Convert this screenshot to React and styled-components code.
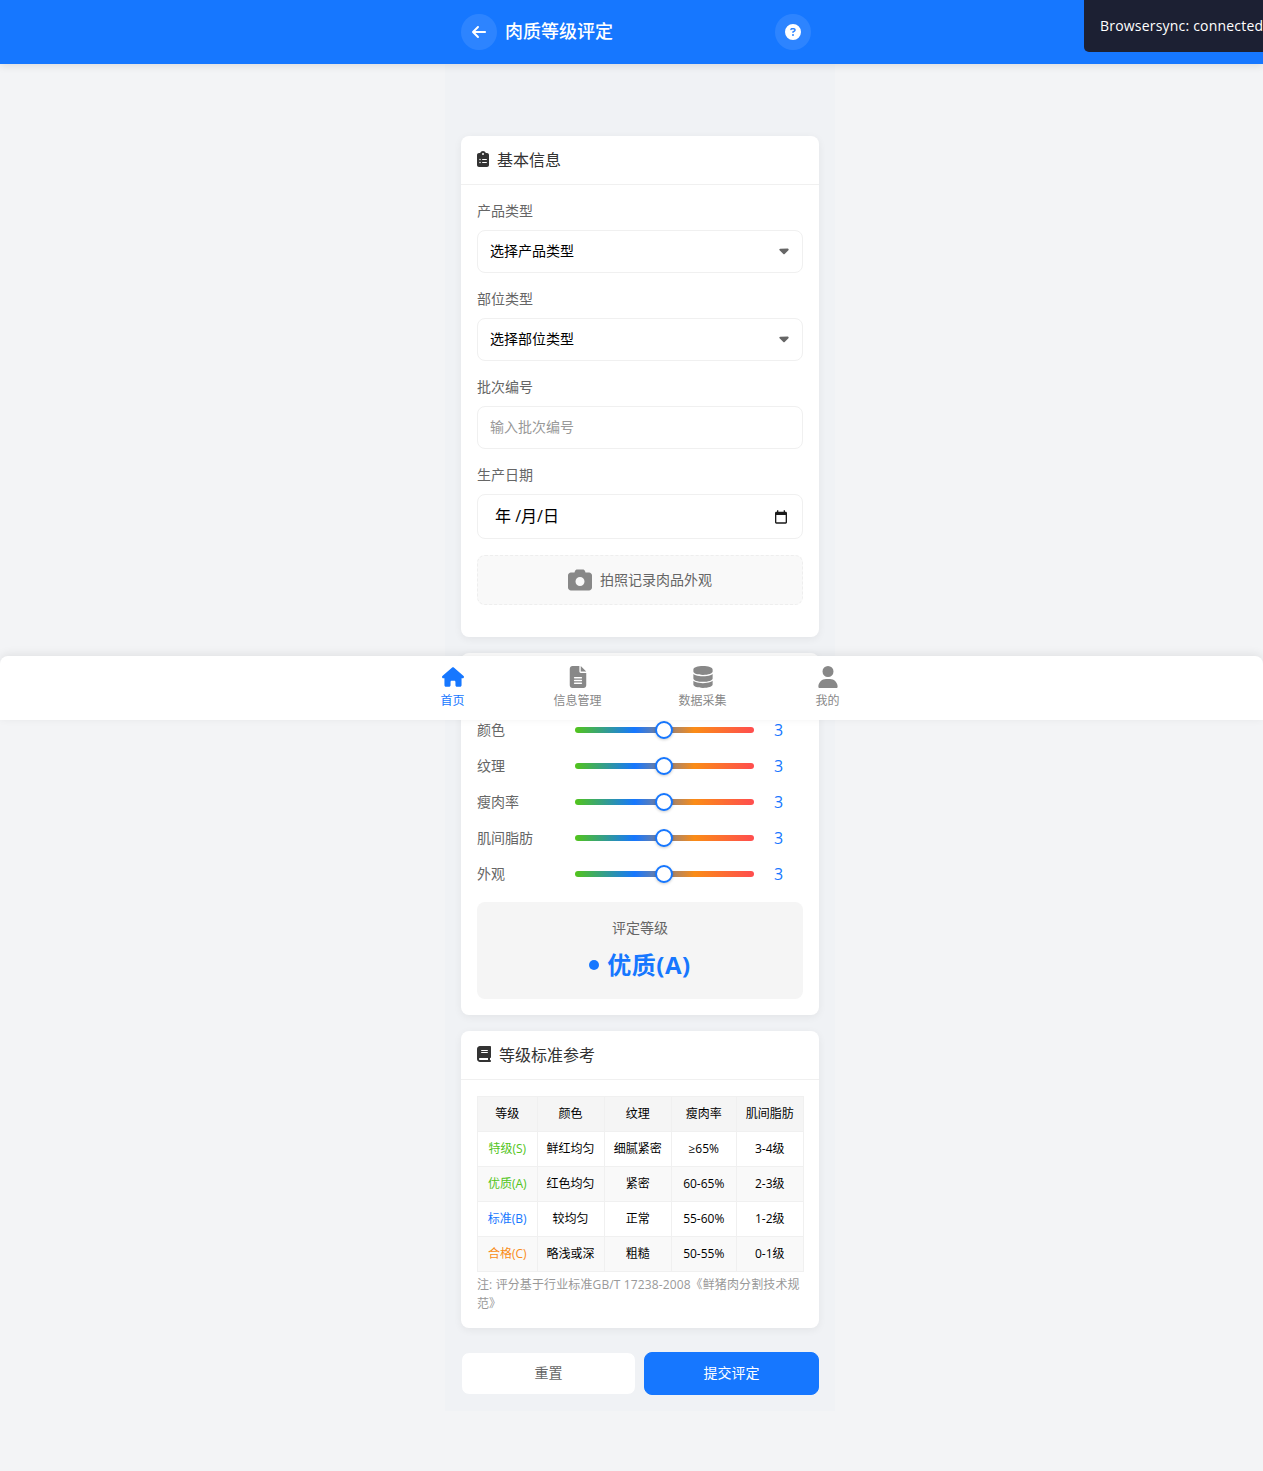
import React from "react";
import styled, { createGlobalStyle } from "styled-components";
import {
  FaArrowLeft,
  FaCircleQuestion,
  FaClipboardList,
  FaBook,
  FaCamera,
  FaHouse,
  FaFileLines,
  FaDatabase,
  FaUser,
  FaCaretDown,
} from "react-icons/fa6";

const GlobalStyle = createGlobalStyle`
  html, body {
    margin: 0;
    padding: 0;
    background: #f3f4f6;
  }
  * {
    box-sizing: border-box;
  }
  body {
    font-family: "Open Sans", "Noto Sans CJK SC", sans-serif;
    color: #333;
  }
`;

const Page = styled.div`
  position: relative;
  width: 100%;
  height: 1471px;
  overflow: hidden;
`;

const Header = styled.header`
  position: relative;
  height: 64px;
  background: #1677ff;
  box-shadow: 0 2px 8px rgba(0, 0, 0, 0.1);
  display: flex;
  justify-content: center;
  padding-left: 17px;
`;

const HeaderInner = styled.div`
  width: 358px;
  display: flex;
  align-items: center;
  padding-right: 8px;
`;

const RoundButton = styled.div`
  width: 36px;
  height: 36px;
  border-radius: 50%;
  background: rgba(255, 255, 255, 0.1);
  color: #fff;
  font-size: 16px;
  display: flex;
  align-items: center;
  justify-content: center;
`;

const Title = styled.h1`
  flex: 1;
  margin: 0 0 4px 8px;
  font-size: 18px;
  font-weight: 500;
  color: #fff;
`;

const Toast = styled.div`
  position: absolute;
  top: 0;
  right: 0;
  width: 179px;
  height: 52px;
  padding: 16px 0 0 16px;
  background: #1c2033;
  color: #fff;
  font-size: 14px;
  line-height: 20px;
  letter-spacing: 0.2px;
  white-space: nowrap;
  overflow: hidden;
  border-bottom-left-radius: 5px;
`;

const Content = styled.div`
  display: flex;
  justify-content: center;
  padding-left: 17px;
`;

const Main = styled.main`
  display: flex;
  flex-direction: column;
  gap: 16px;
  width: 390px;
  padding: 72px 16px 16px;
  background: #f0f2f5;
`;

const Card = styled.section`
  background: #fff;
  border-radius: 8px;
  box-shadow: 0 2px 8px rgba(0, 0, 0, 0.06);
`;

const CardHeader = styled.div`
  height: 49px;
  padding: 0 16px 3px;
  border-bottom: 1px solid #f0f0f0;
  display: flex;
  align-items: center;
  gap: 8px;
  font-size: 16px;
  font-weight: 400;
  color: #333;

  svg {
    height: 16px;
    width: ${({ $iconWidth }) => $iconWidth}px;
  }
`;

const CardBody = styled.div`
  padding: ${({ $bottom }) => `16px 16px ${$bottom}px`};
`;

const Field = styled.div`
  margin-bottom: 16px;
`;

const Label = styled.label`
  display: block;
  font-size: 14px;
  line-height: 19px;
  margin-bottom: 10px;
  color: #666;
`;

const SelectBox = styled.div`
  height: 43px;
  padding: 0 13px 4px 12px;
  border: 1px solid #f0f0f0;
  border-radius: 8px;
  display: flex;
  align-items: center;
  justify-content: space-between;
  font-size: 14px;
  color: #000;

  svg {
    height: 15px;
    width: 10px;
    color: #666;
    position: relative;
    top: 1px;
  }
`;

const TextInput = styled.input`
  display: block;
  width: 100%;
  height: 43px;
  padding: 0 12px 2px;
  border: 1px solid #f0f0f0;
  border-radius: 8px;
  font-family: inherit;
  font-size: 14px;
  outline: none;

  &::placeholder {
    color: #999;
  }
`;

const DateBox = styled(SelectBox)`
  height: 45px;
  padding: 0 13px 4px 17px;
  font-size: 16px;

  svg {
    height: 16px;
    width: 16px;
    color: #1a1a1a;
    top: 2px;
  }
`;

const PhotoBox = styled.div`
  height: 50px;
  border: 1px dashed #eee;
  border-radius: 8px;
  background: #f9f9f9;
  display: flex;
  align-items: center;
  justify-content: center;
  gap: 8px;
  font-size: 14px;
  color: #666;
  padding-bottom: 3px;

  svg {
    height: 24px;
    width: 24px;
    color: #888;
    position: relative;
    top: 1px;
  }
`;

const SliderRow = styled.div`
  height: 24px;
  margin-bottom: 12px;
  display: flex;
  align-items: center;
`;

const SliderLabel = styled.span`
  width: 98px;
  padding-bottom: 2px;
  font-size: 14px;
  color: #666;
`;

const Slider = styled.input.attrs({ type: "range", min: 1, max: 5, step: 1 })`
  appearance: none;
  width: 179px;
  height: 6px;
  margin: 0;
  border-radius: 3px;
  outline: none;
  background: linear-gradient(to right, #52c41a, #1677ff, #fa8c16, #ff4d4f);

  &::-webkit-slider-thumb {
    appearance: none;
    width: 18px;
    height: 18px;
    border-radius: 50%;
    background: #fff;
    border: 2px solid #1677ff;
    box-shadow: 0 1px 3px rgba(0, 0, 0, 0.2);
    transform: translateX(-1px);
  }
`;

const SliderValue = styled.span`
  width: 49px;
  text-align: center;
  font-size: 16px;
  color: #1677ff;
`;

const GradeBox = styled.div`
  height: 97px;
  margin-top: 16px;
  border-radius: 8px;
  background: #f5f5f5;
  padding-top: 16px;
  text-align: center;
`;

const GradeLabel = styled.div`
  font-size: 14px;
  line-height: 20px;
  color: #666;
`;

const GradeValue = styled.div`
  margin-top: 8px;
  display: flex;
  align-items: center;
  justify-content: center;
  gap: 8px;
  font-size: 24px;
  line-height: 38px;
  font-weight: 700;
  letter-spacing: 0.5px;
  color: #1677ff;
`;

const Dot = styled.i`
  width: 10px;
  height: 10px;
  border-radius: 50%;
  background: #1677ff;
`;

const Table = styled.table`
  width: 100%;
  table-layout: fixed;
  border-collapse: collapse;
  font-size: 12px;
  color: #000;
  text-align: center;

  th, td {
    height: 35px;
    padding: 0 0 2px;
    border: 1px solid #f0f0f0;
    font-weight: 400;
  }

  th {
    background: #f5f5f5;
  }

  th:nth-child(1) { width: 59.5px; }
  th:nth-child(2) { width: 67px; }
  th:nth-child(3) { width: 67.5px; }
  th:nth-child(4) { width: 64.5px; }
  th:nth-child(5) { width: 67.5px; }

  tbody tr:nth-child(even) {
    background: #f9f9f9;
  }
`;

const GradeCell = styled.td`
  color: ${({ $color }) => $color};
`;

const Note = styled.p`
  margin: 3px 0 0;
  font-size: 12px;
  line-height: 19px;
  letter-spacing: 0.12px;
  color: #999;
`;

const Actions = styled.div`
  display: flex;
  gap: 8px;
  margin-top: 8px;
`;

const Button = styled.button`
  flex: 1;
  height: 43px;
  padding: 0 0 4px;
  border-radius: 8px;
  border: 1px solid ${({ $primary }) => ($primary ? "#1677ff" : "#f0f2f5")};
  background: ${({ $primary }) => ($primary ? "#1677ff" : "#fff")};
  color: ${({ $primary }) => ($primary ? "#fff" : "#666")};
  font-family: inherit;
  font-size: 14px;
`;

const BottomNav = styled.nav`
  position: absolute;
  top: 656px;
  left: 0;
  right: 0;
  height: 64px;
  padding-left: 17px;
  background: #fff;
  border-radius: 8px 8px 0 0;
  box-shadow: 0 -2px 10px rgba(0, 0, 0, 0.08);
  display: flex;
  justify-content: center;
`;

const NavItem = styled.div`
  width: 125px;
  padding-top: 10px;
  display: flex;
  flex-direction: column;
  align-items: center;
  font-size: 12px;
  line-height: 18px;
  color: ${({ $active }) => ($active ? "#1677ff" : "#888")};

  svg {
    height: 22px;
    width: auto;
    margin-bottom: 4px;
  }
`;

// same shape as the browser's own date picker glyph
const CalendarIcon = () => (
  <svg viewBox="0 0 24 24" fill="currentColor">
    <path d="M19 4h-1V2h-2v2H8V2H6v2H5c-1.11 0-1.99.9-1.99 2L3 20c0 1.1.89 2 2 2h14c1.1 0 2-.9 2-2V6c0-1.1-.9-2-2-2zm0 16H5V9h14v11z" />
  </svg>
);

const sliders = ["颜色", "纹理", "瘦肉率", "肌间脂肪", "外观"];

const rows = [
  ["特级(S)", "#52c41a", "鲜红均匀", "细腻紧密", "≥65%", "3-4级"],
  ["优质(A)", "#52c41a", "红色均匀", "紧密", "60-65%", "2-3级"],
  ["标准(B)", "#1677ff", "较均匀", "正常", "55-60%", "1-2级"],
  ["合格(C)", "#fa8c16", "略浅或深", "粗糙", "50-55%", "0-1级"],
];

export default function App() {
  return (
    <Page>
      <GlobalStyle />
      <Header>
        <HeaderInner>
          <RoundButton><FaArrowLeft /></RoundButton>
          <Title>肉质等级评定</Title>
          <RoundButton><FaCircleQuestion /></RoundButton>
        </HeaderInner>
      </Header>
      <Toast>Browsersync: connected</Toast>

      <Content>
        <Main>
          <Card>
            <CardHeader $iconWidth={12}><FaClipboardList />基本信息</CardHeader>
            <CardBody $bottom={32}>
              <Field>
                <Label>产品类型</Label>
                <SelectBox>选择产品类型<FaCaretDown /></SelectBox>
              </Field>
              <Field>
                <Label>部位类型</Label>
                <SelectBox>选择部位类型<FaCaretDown /></SelectBox>
              </Field>
              <Field>
                <Label>批次编号</Label>
                <TextInput placeholder="输入批次编号" />
              </Field>
              <Field>
                <Label>生产日期</Label>
                <DateBox>年 /月/日<CalendarIcon /></DateBox>
              </Field>
              <PhotoBox><FaCamera />拍照记录肉品外观</PhotoBox>
            </CardBody>
          </Card>

          <Card>
            <CardHeader $iconWidth={12}>评分标准</CardHeader>
            <CardBody $bottom={16}>
              {sliders.map((name) => (
                <SliderRow key={name}>
                  <SliderLabel>{name}</SliderLabel>
                  <Slider defaultValue={3} />
                  <SliderValue>3</SliderValue>
                </SliderRow>
              ))}
              <GradeBox>
                <GradeLabel>评定等级</GradeLabel>
                <GradeValue><Dot />优质(A)</GradeValue>
              </GradeBox>
            </CardBody>
          </Card>

          <Card>
            <CardHeader $iconWidth={14}><FaBook />等级标准参考</CardHeader>
            <CardBody $bottom={15}>
              <Table>
                <thead>
                  <tr>
                    <th>等级</th>
                    <th>颜色</th>
                    <th>纹理</th>
                    <th>瘦肉率</th>
                    <th>肌间脂肪</th>
                  </tr>
                </thead>
                <tbody>
                  {rows.map(([grade, color, ...cells]) => (
                    <tr key={grade}>
                      <GradeCell $color={color}>{grade}</GradeCell>
                      {cells.map((cell) => <td key={cell}>{cell}</td>)}
                    </tr>
                  ))}
                </tbody>
              </Table>
              <Note>注: 评分基于行业标准GB/T 17238-2008《鲜猪肉分割技术规范》</Note>
            </CardBody>
          </Card>

          <Actions>
            <Button>重置</Button>
            <Button $primary>提交评定</Button>
          </Actions>
        </Main>
      </Content>

      <BottomNav>
        <NavItem $active><FaHouse />首页</NavItem>
        <NavItem><FaFileLines />信息管理</NavItem>
        <NavItem><FaDatabase />数据采集</NavItem>
        <NavItem><FaUser />我的</NavItem>
      </BottomNav>
    </Page>
  );
}
